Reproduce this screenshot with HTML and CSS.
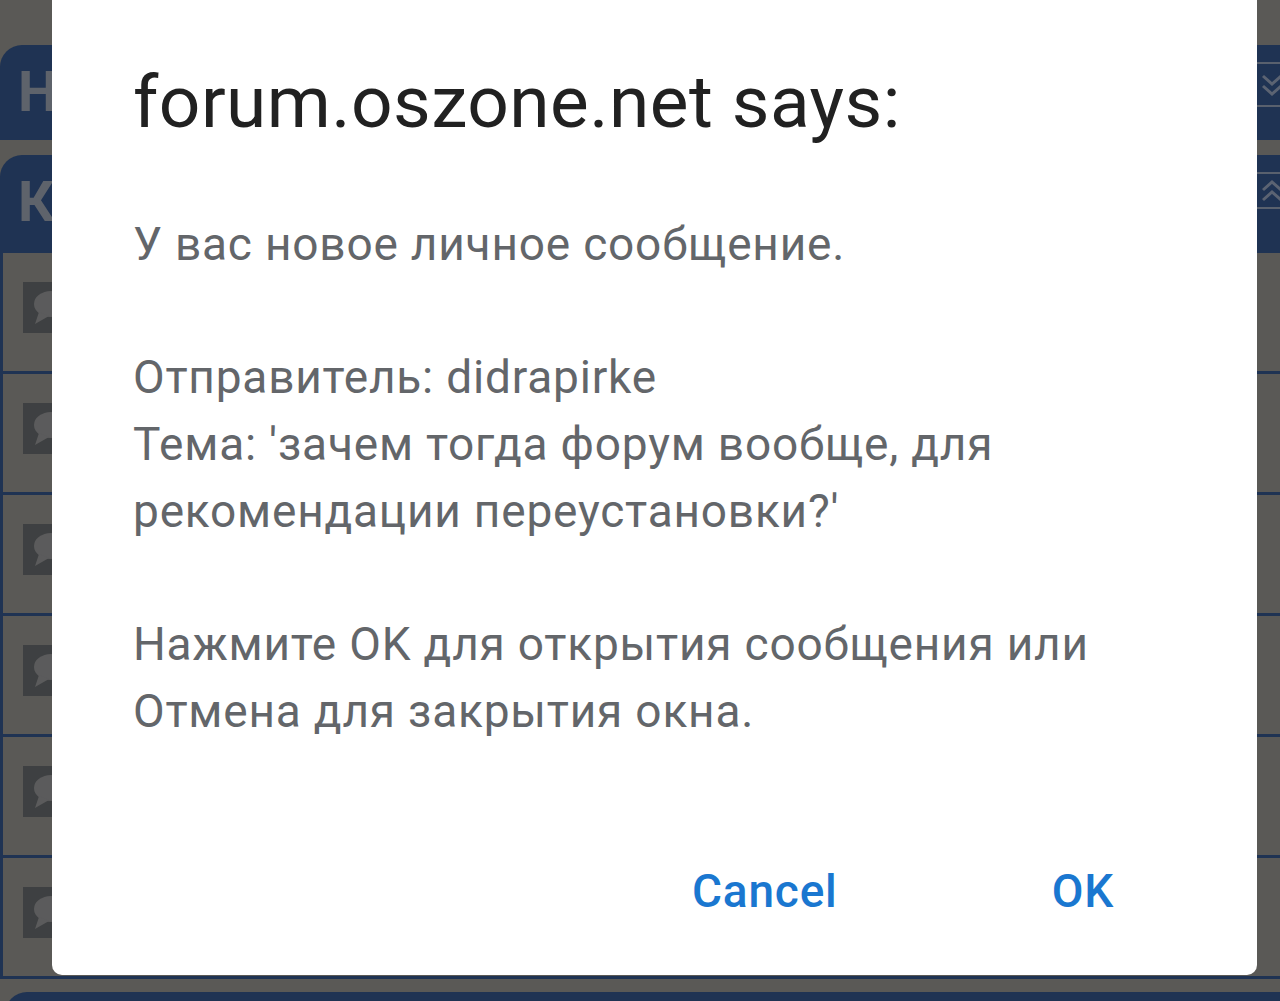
FILE: index.html
```html
<!DOCTYPE html>
<html lang="ru">
<head>
    <meta charset="UTF-8">
    <meta name="viewport" content="width=device-width, initial-scale=1.0">
    <title>forum.oszone.net</title>
    <link rel="stylesheet" href="styles.css">
</head>
<body>
    <div class="page">
        <div class="cat cat-first">
            <span class="cat-title">Н</span>
            <span class="collapse collapse-down">
                <svg width="20" height="30" viewBox="0 0 20 30"><path d="M3 6 L12 14 L21 6 M3 16 L12 24 L21 16" fill="none" stroke="#5b6372" stroke-width="3"/></svg>
            </span>
        </div>
        <div class="cat cat-second">
            <span class="cat-title">К</span>
            <span class="collapse collapse-up">
                <svg width="20" height="26" viewBox="0 0 20 26"><path d="M3 12 L12 4 L21 12 M3 22 L12 14 L21 22" fill="none" stroke="#5b6372" stroke-width="3"/></svg>
            </span>
        </div>
        <div class="forums">
            <div class="forum-row"><span class="forum-icon"><svg width="40" height="51" viewBox="0 0 40 51"><ellipse cx="28" cy="22" rx="17" ry="13" fill="#5b5b5c"/><path d="M16 30 L12 42 L26 34 Z" fill="#5b5b5c"/></svg></span></div>
            <div class="forum-row"><span class="forum-icon"><svg width="40" height="51" viewBox="0 0 40 51"><ellipse cx="28" cy="22" rx="17" ry="13" fill="#5b5b5c"/><path d="M16 30 L12 42 L26 34 Z" fill="#5b5b5c"/></svg></span></div>
            <div class="forum-row"><span class="forum-icon"><svg width="40" height="51" viewBox="0 0 40 51"><ellipse cx="28" cy="22" rx="17" ry="13" fill="#5b5b5c"/><path d="M16 30 L12 42 L26 34 Z" fill="#5b5b5c"/></svg></span></div>
            <div class="forum-row"><span class="forum-icon"><svg width="40" height="51" viewBox="0 0 40 51"><ellipse cx="28" cy="22" rx="17" ry="13" fill="#5b5b5c"/><path d="M16 30 L12 42 L26 34 Z" fill="#5b5b5c"/></svg></span></div>
            <div class="forum-row"><span class="forum-icon"><svg width="40" height="51" viewBox="0 0 40 51"><ellipse cx="28" cy="22" rx="17" ry="13" fill="#5b5b5c"/><path d="M16 30 L12 42 L26 34 Z" fill="#5b5b5c"/></svg></span></div>
            <div class="forum-row"><span class="forum-icon"><svg width="40" height="51" viewBox="0 0 40 51"><ellipse cx="28" cy="22" rx="17" ry="13" fill="#5b5b5c"/><path d="M16 30 L12 42 L26 34 Z" fill="#5b5b5c"/></svg></span></div>
        </div>
        <div class="cat cat-bottom"></div>
    </div>

    <div class="dialog">
        <h1 class="dialog-title">forum.oszone.net says:</h1>
        <div class="dialog-message">
            <p>У вас новое личное сообщение.</p>
            <p>Отправитель: didrapirke<br>Тема: 'зачем тогда форум вообще, для рекомендации переустановки?'</p>
            <p>Нажмите OK для открытия сообщения или Отмена для закрытия окна.</p>
        </div>
        <div class="dialog-actions">
            <button class="dialog-btn">Cancel</button>
            <button class="dialog-btn">OK</button>
        </div>
    </div>
</body>
</html>
```

FILE: styles.css
```css
body {
    margin: 0;
    background: #5a5956;
    font-family: Roboto, "Noto Sans", sans-serif;
    height: 1001px;
    overflow: hidden;
}
.page {
    padding-top: 45px;
}
.cat {
    background: #1f3353;
    border-radius: 22px 0 0 0;
    display: flex;
    justify-content: space-between;
    align-items: flex-start;
    overflow: hidden;
}
.cat-first {
    height: 95px;
}
.cat-second {
    height: 98px;
    margin-top: 15px;
}
.cat-bottom {
    height: 30px;
    margin-top: 13px;
    margin-left: 5px;
}
.cat-title {
    padding-left: 18px;
    font-size: 56px;
    font-weight: bold;
    line-height: 95px;
    color: #5e636b;
}
.collapse {
    width: 23px;
    margin-top: 17px;
    border-top: 2px solid #59616e;
    border-bottom: 2px solid #59616e;
    display: flex;
    align-items: center;
    justify-content: flex-end;
    overflow: hidden;
}
.collapse-down {
    height: 41px;
}
.collapse-up {
    height: 33px;
}
.forums {
    border-left: 3px solid #1f3353;
}
.forum-row {
    box-sizing: border-box;
    height: 121px;
    border-bottom: 3px solid #1f3353;
    padding: 29px 0 0 20px;
}
.forum-icon {
    display: block;
    width: 40px;
    height: 51px;
    background: #3e4042;
}

.dialog {
    position: absolute;
    left: 52px;
    top: -20px;
    width: 1205px;
    box-sizing: border-box;
    padding: 79px 81px 56px;
    background: #ffffff;
    border-radius: 10px;
}
.dialog-title {
    margin: 0 0 66px;
    font-size: 73px;
    font-weight: normal;
    line-height: 86px;
    letter-spacing: 0.45px;
    color: #212121;
}
.dialog-message p {
    margin: 0 0 66.7px;
    font-size: 46px;
    line-height: 66.7px;
    letter-spacing: 0.8px;
    color: #63666a;
}
.dialog-message p:last-child {
    margin-bottom: 0;
}
.dialog-actions {
    margin-top: 118px;
    padding-right: 62px;
    display: flex;
    justify-content: flex-end;
    gap: 214px;
}
.dialog-btn {
    padding: 0;
    border: none;
    background: none;
    font-family: Roboto, "Noto Sans", sans-serif;
    font-size: 46px;
    font-weight: 500;
    line-height: 56px;
    letter-spacing: 0.8px;
    color: #1a77d0;
}
```
